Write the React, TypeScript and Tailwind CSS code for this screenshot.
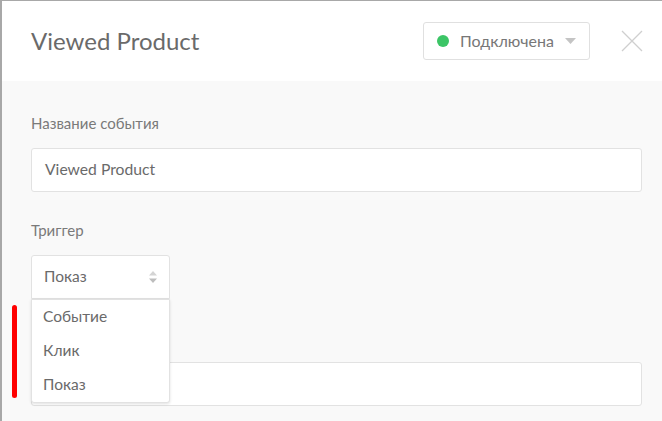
const font = { fontFamily: 'Lato, "Noto Sans", sans-serif' };

function Field({ label, children }: { label: string; children: React.ReactNode }) {
  return (
    <div className="flex flex-col">
      <div className="h-[20px] text-[15px] leading-[16px] text-[#7a7a7a]">{label}</div>
      <div className="mt-[13px]">{children}</div>
    </div>
  );
}

export default function App() {
  const options = ['Событие', 'Клик', 'Показ'];

  return (
    <div
      className="relative w-[662px] h-[421px] overflow-hidden border-t border-l-2 border-[#a8a8a8] bg-[#f9f9f9]"
      style={font}
    >
      {/* header */}
      <div className="h-[80px] bg-white flex items-center pl-[29px] pr-[19px]">
        <h1 className="text-[24px] text-[#6a6a6a] font-normal flex-1 -mt-[1px]">Viewed Product</h1>
        <button className="h-[38px] w-[167px] flex items-center border border-[#e0e0e0] rounded-[3px] bg-white pl-[13px] pr-[13px] -mt-[1px]">
          <span className="w-[12px] h-[12px] rounded-full bg-[#3cc566]" />
          <span className="ml-[11px] text-[16px] text-[#777] flex-1 text-left">Подключена</span>
          <svg width="11" height="6" viewBox="0 0 11 6">
            <path d="M0 0 L11 0 L5.5 6 Z" fill="#c4c4c4" />
          </svg>
        </button>
        <svg width="22" height="22" viewBox="0 0 22 22" className="ml-[31px]">
          <path d="M1 1 L21 21 M21 1 L1 21" stroke="#cfcfcf" strokeWidth="1.3" />
        </svg>
      </div>

      {/* body */}
      <div className="pt-[34px] pl-[29px] pr-[20px] flex flex-col gap-[30px]">
        <Field label="Название события">
          <div className="h-[44px] bg-white border border-[#e2e2e2] rounded-[3px] flex items-center px-[13px] text-[15.7px] text-[#6a6a6a]">
            Viewed Product
          </div>
        </Field>

        <Field label="Триггер">
          <div className="relative w-[139px]">
            <div className="h-[44px] bg-white border border-[#e2e2e2] rounded-t-[3px] flex items-center pl-[12px] pr-[12px] text-[15.5px] text-[#6a6a6a]">
              <span className="flex-1">Показ</span>
              <svg width="8" height="12" viewBox="0 0 8 12">
                <path d="M0 4.5 L4 0 L8 4.5 Z" fill="#d4d4d4" />
                <path d="M0 7.5 L8 7.5 L4 12 Z" fill="#bdbdbd" />
              </svg>
            </div>
            <ul className="absolute left-0 top-[44px] w-[139px] z-10 bg-white border border-[#e2e2e2] rounded-b-[3px] shadow-[0_1px_3px_rgba(0,0,0,0.12)]">
              {options.map((o) => (
                <li key={o} className="h-[34px] flex items-center pl-[11px] text-[15.5px] text-[#6a6a6a]">
                  {o}
                </li>
              ))}
            </ul>
          </div>
        </Field>

        <Field label="">
          <div className="h-[44px] bg-white border border-[#e2e2e2] rounded-[3px]" />
        </Field>
      </div>

      {/* annotation */}
      <div className="absolute left-[10px] top-[304px] w-[5px] h-[93px] rounded-full bg-[#ff0000]" />
    </div>
  );
}
